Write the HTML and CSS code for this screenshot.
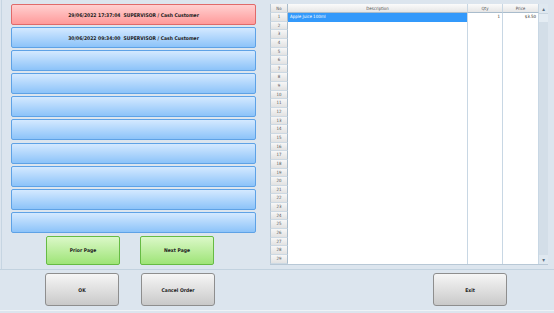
FILE: index.html
```html
<!DOCTYPE html>
<html lang="en">
<head>
    <meta charset="UTF-8">
    <title>Recall Order</title>
    <link rel="stylesheet" href="styles.css">
</head>
<body>
    <div class="main">
        <div class="left-panel">
            <div class="order-list">
                <button class="order-btn active">29/06/2022 17:37:04&nbsp; SUPERVISOR / Cash Customer</button>
                <button class="order-btn">30/06/2022 09:34:00&nbsp; SUPERVISOR / Cash Customer</button>
                <button class="order-btn"></button>
                <button class="order-btn"></button>
                <button class="order-btn"></button>
                <button class="order-btn"></button>
                <button class="order-btn"></button>
                <button class="order-btn"></button>
                <button class="order-btn"></button>
                <button class="order-btn"></button>
            </div>
            <div class="page-row">
                <button class="page-btn">Prior Page</button>
                <button class="page-btn">Next Page</button>
            </div>
        </div>
        <div class="right-panel">
            <div class="grid">
                <div class="table">
                    <div class="row head">
                        <div class="cell no">No</div>
                        <div class="cell">Description</div>
                        <div class="cell">Qty</div>
                        <div class="cell">Price</div>
                    </div>
                    <div class="row">
                        <div class="cell no">1</div>
                        <div class="cell desc selected">Apple Juice 100ml</div>
                        <div class="cell num">1</div>
                        <div class="cell num">$3.50</div>
                    </div>
                    <div class="row"><div class="cell no">2</div><div class="cell"></div><div class="cell"></div><div class="cell"></div></div>
                    <div class="row"><div class="cell no">3</div><div class="cell"></div><div class="cell"></div><div class="cell"></div></div>
                    <div class="row"><div class="cell no">4</div><div class="cell"></div><div class="cell"></div><div class="cell"></div></div>
                    <div class="row"><div class="cell no">5</div><div class="cell"></div><div class="cell"></div><div class="cell"></div></div>
                    <div class="row"><div class="cell no">6</div><div class="cell"></div><div class="cell"></div><div class="cell"></div></div>
                    <div class="row"><div class="cell no">7</div><div class="cell"></div><div class="cell"></div><div class="cell"></div></div>
                    <div class="row"><div class="cell no">8</div><div class="cell"></div><div class="cell"></div><div class="cell"></div></div>
                    <div class="row"><div class="cell no">9</div><div class="cell"></div><div class="cell"></div><div class="cell"></div></div>
                    <div class="row"><div class="cell no">10</div><div class="cell"></div><div class="cell"></div><div class="cell"></div></div>
                    <div class="row"><div class="cell no">11</div><div class="cell"></div><div class="cell"></div><div class="cell"></div></div>
                    <div class="row"><div class="cell no">12</div><div class="cell"></div><div class="cell"></div><div class="cell"></div></div>
                    <div class="row"><div class="cell no">13</div><div class="cell"></div><div class="cell"></div><div class="cell"></div></div>
                    <div class="row"><div class="cell no">14</div><div class="cell"></div><div class="cell"></div><div class="cell"></div></div>
                    <div class="row"><div class="cell no">15</div><div class="cell"></div><div class="cell"></div><div class="cell"></div></div>
                    <div class="row"><div class="cell no">16</div><div class="cell"></div><div class="cell"></div><div class="cell"></div></div>
                    <div class="row"><div class="cell no">17</div><div class="cell"></div><div class="cell"></div><div class="cell"></div></div>
                    <div class="row"><div class="cell no">18</div><div class="cell"></div><div class="cell"></div><div class="cell"></div></div>
                    <div class="row"><div class="cell no">19</div><div class="cell"></div><div class="cell"></div><div class="cell"></div></div>
                    <div class="row"><div class="cell no">20</div><div class="cell"></div><div class="cell"></div><div class="cell"></div></div>
                    <div class="row"><div class="cell no">21</div><div class="cell"></div><div class="cell"></div><div class="cell"></div></div>
                    <div class="row"><div class="cell no">22</div><div class="cell"></div><div class="cell"></div><div class="cell"></div></div>
                    <div class="row"><div class="cell no">23</div><div class="cell"></div><div class="cell"></div><div class="cell"></div></div>
                    <div class="row"><div class="cell no">24</div><div class="cell"></div><div class="cell"></div><div class="cell"></div></div>
                    <div class="row"><div class="cell no">25</div><div class="cell"></div><div class="cell"></div><div class="cell"></div></div>
                    <div class="row"><div class="cell no">26</div><div class="cell"></div><div class="cell"></div><div class="cell"></div></div>
                    <div class="row"><div class="cell no">27</div><div class="cell"></div><div class="cell"></div><div class="cell"></div></div>
                    <div class="row"><div class="cell no">28</div><div class="cell"></div><div class="cell"></div><div class="cell"></div></div>
                    <div class="row"><div class="cell no">29</div><div class="cell"></div><div class="cell"></div><div class="cell"></div></div>
                </div>
                <div class="scrollbar">
                    <div class="arrow">&#9652;</div>
                    <div class="thumb"></div>
                    <div class="track"></div>
                    <div class="arrow">&#9662;</div>
                </div>
            </div>
        </div>
    </div>
    <div class="footer">
        <button class="gray-btn">OK</button>
        <button class="gray-btn">Cancel Order</button>
        <button class="gray-btn exit-btn">Exit</button>
    </div>
</body>
</html>
```

FILE: styles.css
```css
body {
    margin: 0;
    width: 554px;
    height: 313px;
    overflow: hidden;
    background-color: #dce5ee;
    font-family: 'DejaVu Sans Condensed', 'DejaVu Sans', sans-serif;
}

button {
    font-family: 'DejaVu Sans Condensed', 'DejaVu Sans', sans-serif;
    font-weight: bold;
    font-size: 5px;
    color: #222;
    padding: 0;
    cursor: pointer;
}

.main {
    display: flex;
    height: 269px;
    border-bottom: 1px solid #c2d2df;
}

.left-panel {
    box-sizing: border-box;
    width: 267px;
    border-left: 1px solid #c6d5e2;
    margin-left: 1px;
    padding: 4px 0 0 9px;
}

.order-list {
    display: flex;
    flex-direction: column;
    gap: 2.1px;
}

.order-btn {
    width: 245px;
    height: 21px;
    border: 1px solid #5ea2e6;
    border-radius: 2px;
    background: linear-gradient(#d4e9ff, #8cc3f9);
}

.order-btn.active {
    border-color: #e06a6a;
    background: linear-gradient(#ffd0d0, #ff9a9a);
}

.page-row {
    display: flex;
    gap: 20px;
    padding: 3px 0 0 35px;
}

.page-btn {
    width: 74px;
    height: 29px;
    border: 1px solid #66bb44;
    border-radius: 2px;
    background: linear-gradient(#dbf8c8, #9ee477);
}

.right-panel {
    padding: 4px 0 0 2px;
}

.grid {
    display: flex;
    width: 278px;
    height: 260px;
    border-bottom: 1px solid #b8c8d6;
    background: #fff;
}

.table {
    width: 269px;
}

.row {
    display: grid;
    grid-template-columns: 18px 180px 35px 36px;
    height: 8.65px;
}

.row.head {
    height: 9px;
}

.cell {
    border-right: 1px solid #c8d7e4;
    font-size: 4.4px;
    line-height: 8.65px;
    color: #333;
    padding: 0 2px;
    overflow: hidden;
    white-space: nowrap;
}

.head .cell {
    text-align: center;
    color: #555;
    line-height: 9px;
    background: linear-gradient(#fbfbfb, #e6e6e6);
    border-bottom: 1px solid #a9bccc;
    box-sizing: border-box;
}

.cell.no {
    text-align: center;
    color: #555;
    padding: 0;
    background: linear-gradient(#f7f7f7, #e2e2e2);
    border-right: 1px solid #a9bccc;
    border-bottom: 1px solid #cdd9e3;
    box-sizing: border-box;
    border-left: 1px solid #b8c8d6;
}

.cell.selected {
    background: #3399fb;
    color: #fff;
}

.cell.num {
    text-align: right;
}

.scrollbar {
    width: 9px;
    display: flex;
    flex-direction: column;
    background: #d3dee8;
}

.arrow {
    height: 9px;
    font-size: 6px;
    line-height: 9px;
    text-align: center;
    color: #5a6e80;
    background: #dfe8f0;
}

.thumb {
    height: 8px;
    background: #e4ecf3;
    border-top: 1px solid #c8d5e0;
}

.track {
    flex: 1;
}

.footer {
    display: flex;
    gap: 22px;
    height: 37px;
    padding: 3px 0 0 45px;
    border-bottom: 1px solid #eef3f7;
}

.gray-btn {
    width: 74px;
    height: 33px;
    border: 1px solid #8e8e8e;
    border-radius: 3px;
    background: linear-gradient(#f6f6f6, #c9c9c9);
}

.exit-btn {
    margin-left: 196px;
}
```
